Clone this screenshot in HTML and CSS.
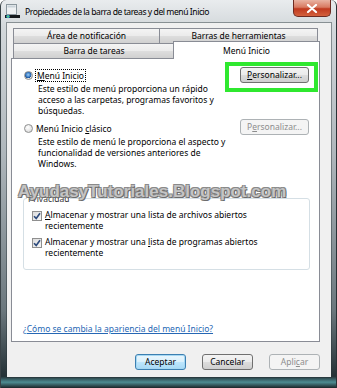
FILE: index.html
```html
<!DOCTYPE html>
<html lang="es">
<head>
    <meta charset="UTF-8">
    <title>Propiedades de la barra de tareas y del menú Inicio</title>
    <link rel="stylesheet" href="styles.css">
</head>
<body>
    <div class="window">
        <div class="titlebar">
            <svg class="app-icon" width="15" height="15" viewBox="0 0 15 15">
                <rect x="1.5" y="0.5" width="10" height="10" fill="#eef1f3" stroke="#8b979e"/>
                <rect x="2.5" y="1.5" width="8" height="2" fill="#c9d3da"/>
                <rect x="0" y="11" width="15" height="3" fill="#151a1d"/>
                <circle cx="3" cy="12.5" r="1.8" fill="#2f9fd8"/>
                <circle cx="3" cy="12.5" r="0.9" fill="#5fd35a"/>
            </svg>
            <span class="title">Propiedades de la barra de tareas y del menú Inicio</span>
            <div class="close">
                <svg width="12" height="9" viewBox="0 0 12 9">
                    <path d="M2 1 L10 8 M10 1 L2 8" stroke="#fff" stroke-width="2.2" stroke-linecap="round"/>
                </svg>
            </div>
        </div>

        <div class="client">
            <div class="tabs">
                <div class="tab-row">
                    <div class="tab tab-notif">Área de notificación</div>
                    <div class="tab tab-tools">Barras de herramientas</div>
                </div>
                <div class="tab-row">
                    <div class="tab tab-taskbar">Barra de tareas</div>
                    <div class="tab tab-start active">Menú Inicio</div>
                </div>
            </div>

            <div class="panel">
                <div class="option">
                    <div class="option-text">
                        <div class="radio-row">
                            <span class="radio checked"></span>
                            <span class="focus"><u>M</u>enú Inicio</span>
                        </div>
                        <p class="desc">Este estilo de menú proporciona un rápido<br>acceso a las carpetas, programas favoritos y<br>búsquedas.</p>
                    </div>
                    <div class="btn-wrap">
                        <button class="btn"><u>P</u>ersonalizar...</button>
                        <span class="highlight"></span>
                    </div>
                </div>

                <div class="option second">
                    <div class="option-text">
                        <div class="radio-row">
                            <span class="radio"></span>
                            <span class="label">Menú Inicio <u>c</u>lásico</span>
                        </div>
                        <p class="desc">Este estilo de menú le proporciona el aspecto y<br>funcionalidad de versiones anteriores de<br>Windows.</p>
                    </div>
                    <div class="btn-wrap">
                        <button class="btn disabled">P<u>e</u>rsonalizar...</button>
                    </div>
                </div>

                <fieldset class="group">
                    <legend>Privacidad</legend>
                    <div class="check-row">
                        <span class="checkbox">
                            <svg width="8" height="8" viewBox="0 0 8 8"><path d="M1 4.2 L3.2 6.4 L7 1.2" fill="none" stroke="#2c4a7c" stroke-width="1.6"/></svg>
                        </span>
                        <span><u>A</u>lmacenar y mostrar una lista de archivos abiertos<br>recientemente</span>
                    </div>
                    <div class="check-row">
                        <span class="checkbox">
                            <svg width="8" height="8" viewBox="0 0 8 8"><path d="M1 4.2 L3.2 6.4 L7 1.2" fill="none" stroke="#2c4a7c" stroke-width="1.6"/></svg>
                        </span>
                        <span>Almacenar y mostrar una <u>l</u>ista de programas abiertos<br>recientemente</span>
                    </div>
                </fieldset>

                <a class="help-link" href="#">¿Cómo se cambia la apariencia del menú Inicio?</a>

                <div class="watermark">AyudasyTutoriales.Blogspot.com</div>
            </div>

            <div class="footer">
                <button class="btn default">Aceptar</button>
                <button class="btn">Cancelar</button>
                <button class="btn disabled">Apli<u>c</u>ar</button>
            </div>
        </div>
    </div>
</body>
</html>
```

FILE: styles.css
```css
*{
    box-sizing: border-box;
}
body{
    margin: 0;
    background-color: #ffffff;
    font-family: "Noto Sans", "Open Sans", sans-serif;
    font-size: 8.5px;
    color: #000;
}
.window{
    width: 337px;
    height: 388px;
    display: flex;
    flex-direction: column;
    padding-bottom: 11px;
    border-left: 1px solid #3a4347;
    border-right: 1px solid #2a3236;
    border-radius: 6px 6px 0 0;
    background: linear-gradient(180deg, #e9ecee 0%, #d3d8db 7%, #aeb6bb 40%, #6b777d 80%, #243136 97%, #4d8c92 98.5%, #1b2528 100%);
}
.titlebar{
    height: 23px;
    display: flex;
    align-items: flex-start;
    padding-left: 4px;
}
.app-icon{
    margin-top: 4px;
}
.title{
    margin-left: 5px;
    margin-top: 4px;
    font-size: 8.6px;
    letter-spacing: -0.45px;
    line-height: 16px;
    color: #000;
}
.close{
    margin-left: auto;
    margin-right: 5px;
    width: 38px;
    height: 17px;
    display: flex;
    align-items: center;
    justify-content: center;
    border: 1px solid #6e2b22;
    border-top: none;
    border-radius: 0 0 5px 5px;
    background: linear-gradient(180deg, #e9b3a3 0%, #d87a62 45%, #c0391f 55%, #d3613d 100%);
}
.client{
    flex: 1;
    margin: 0 5px 0 6px;
    display: flex;
    flex-direction: column;
    padding: 5px 11px 7px 4px;
    background-color: #f0f0f0;
    box-shadow: 0 0 0 1px rgba(40, 50, 55, 0.45);
}
.tabs{
    height: 30px;
    margin: 0 2px;
    display: flex;
    flex-direction: column;
}
.tab-row{
    display: flex;
    height: 15px;
}
.tab{
    height: 15px;
    line-height: 14px;
    text-align: center;
    border: 1px solid #898c95;
    border-bottom: none;
    background: linear-gradient(180deg, #f4f4f4 0%, #ebebeb 50%, #dedede 50%, #d0d0d0 100%);
    white-space: nowrap;
}
.tab-notif{ width: 147px; }
.tab-tools{ width: 158px; border-left: none; }
.tab-taskbar{ width: 162px; }
.tab-start{ width: 147px; }
.tab.active{
    position: relative;
    z-index: 1;
    height: 18px;
    margin: -2px -2px -1px -2px;
    line-height: 17px;
    background: #ffffff;
}
.panel{
    position: relative;
    height: 284px;
    display: flex;
    flex-direction: column;
    padding: 8px 10px 7px 12px;
    border: 1px solid #898c95;
    background-color: #ffffff;
}
.option{
    display: flex;
    justify-content: space-between;
    align-items: flex-start;
}
.option.second{
    margin-top: 4px;
}
.option.second .btn-wrap{
    margin-top: -1px;
}
.radio-row{
    height: 16px;
    display: flex;
    align-items: center;
    line-height: 11px;
}
.radio{
    width: 9px;
    height: 9px;
    border-radius: 50%;
    border: 1px solid #8e8f8f;
    background: radial-gradient(circle at 40% 35%, #ffffff 0%, #e4e4e4 60%, #cfcfcf 100%);
    margin-right: 3px;
}
.radio.checked{
    background: radial-gradient(circle at 45% 40%, #9fd0f5 0%, #2b6fbf 45%, #1c4f8f 55%, #e8e8e8 62%, #d0d0d0 100%);
}
.focus{
    border: 1px dotted #000;
    padding: 0 1px;
    margin-left: -1px;
}
.desc{
    margin: 0 0 0 14px;
    line-height: 11px;
}
.btn-wrap{
    position: relative;
}
.btn{
    height: 16px;
    padding: 0;
    font-family: "Noto Sans", "Open Sans", sans-serif;
    font-size: 8.5px;
    line-height: 14px;
    color: #000;
    border: 1px solid #707070;
    border-radius: 3px;
    background: linear-gradient(180deg, #f3f3f3 0%, #ebebeb 50%, #dddddd 50%, #cfcfcf 100%);
}
.option .btn{
    width: 69px;
}
.btn.disabled{
    color: #8d8d8d;
    border-color: #adb2b5;
    background: #f4f4f4;
}
.btn.default{
    border-color: #3c7fb1;
    background: linear-gradient(180deg, #eaf6fd 0%, #d9f0fc 50%, #bee6fd 50%, #a7d9f5 100%);
    box-shadow: inset 0 0 0 1px #a6d8f3;
}
.highlight{
    position: absolute;
    top: -5px;
    left: -15px;
    right: -9px;
    bottom: -9px;
    border: 4px solid #2fe82f;
}
.group{
    margin: 24px -1px 0 -1px;
    padding: 5px 8px 11px 8px;
    border: 1px solid #d5dfe5;
    border-radius: 3px;
}
.group legend{
    margin-left: -5px;
    padding: 0 1px;
    line-height: 11px;
    color: #333;
}
.check-row{
    display: flex;
    align-items: flex-start;
    line-height: 11px;
}
.check-row + .check-row{
    margin-top: 5px;
}
.checkbox{
    width: 10px;
    height: 10px;
    margin: 2px 3px 0 0;
    flex-shrink: 0;
    display: flex;
    align-items: center;
    justify-content: center;
    border: 1px solid #8f8f8f;
    background: linear-gradient(135deg, #dcdcdc 0%, #f6f6f6 100%);
}
.help-link{
    margin-top: auto;
    margin-left: -1px;
    line-height: 11px;
    color: #2667b4;
    text-decoration: underline;
}
.watermark{
    position: absolute;
    left: 6px;
    top: 124px;
    font-family: "Liberation Sans", Arial, sans-serif;
    font-weight: bold;
    font-size: 17px;
    line-height: 17px;
    color: #c4c4c4;
    text-shadow: 1px 1px 0 #6c6c6c, -1px -1px 0 #8a8a8a, 1px -1px 0 #8a8a8a, -1px 1px 0 #8a8a8a;
    white-space: nowrap;
}
.footer{
    display: flex;
    justify-content: flex-end;
    gap: 16px;
    padding-top: 12px;
}
.footer .btn{
    width: 51px;
}
```
